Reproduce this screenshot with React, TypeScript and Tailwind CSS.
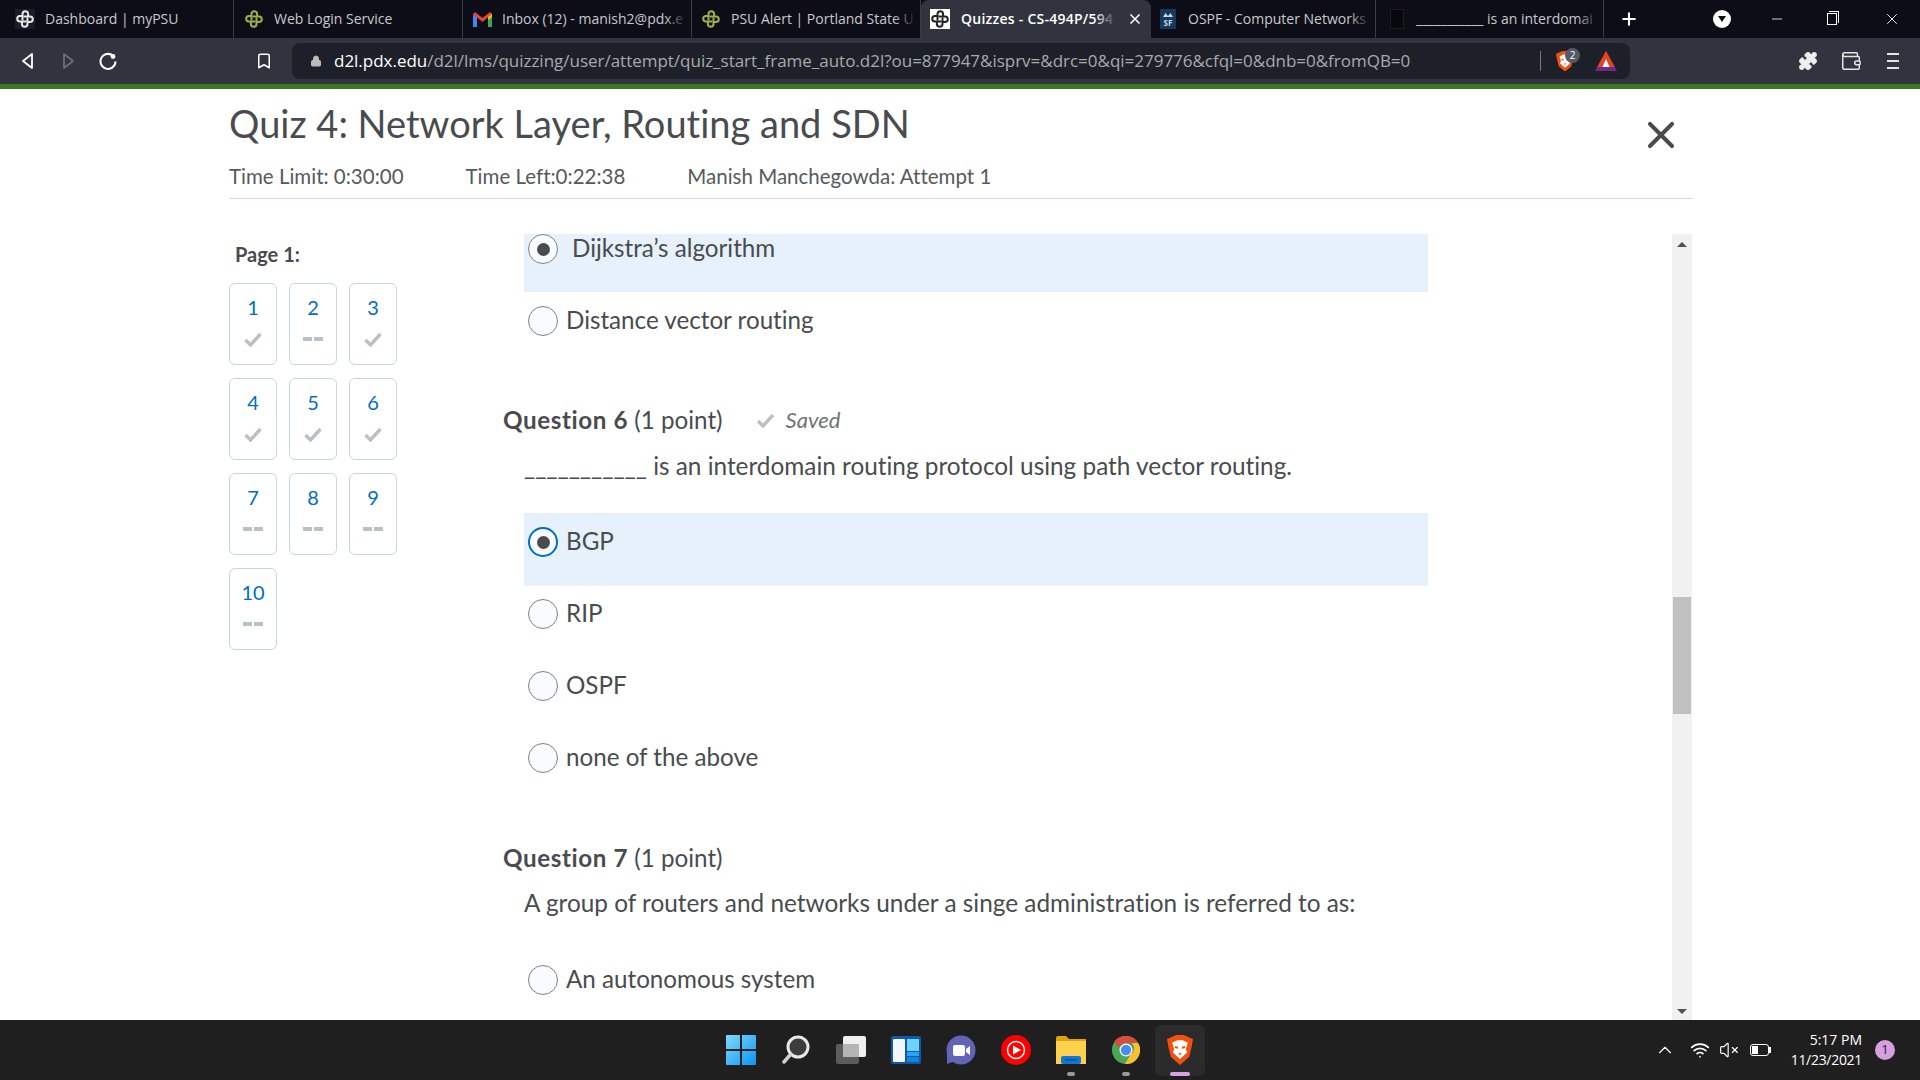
import { Lock, Bookmark, X, Plus, Minus, ChevronUp, Wifi, VolumeX, Puzzle, Wallet } from "lucide-react"
import type { ReactNode } from "react"

function PsuIcon({ color = "#9fb04a" }: { color?: string }) {
  return (
    <svg width="20" height="20" viewBox="0 0 20 20" fill="none" stroke={color} strokeWidth="2">
      <path d="M7.5 11.5V5a2.8 2.8 0 015.6 0v3" />
      <path d="M8.5 7.5H15a2.8 2.8 0 010 5.6h-3" />
      <path d="M12.5 8.5V15a2.8 2.8 0 01-5.6 0v-3" />
      <path d="M11.5 12.5H5a2.8 2.8 0 010-5.6h3" />
    </svg>
  )
}

function GmailIcon() {
  return (
    <svg width="19" height="15" viewBox="0 0 19 15">
      <path d="M0 2v13h4V5z" fill="#4285f4" />
      <path d="M19 2v13h-4V5z" fill="#34a853" />
      <path d="M0 2l2-2 7.5 6L17 0l2 2-9.5 8z" fill="#ea4335" />
      <path d="M15 5l4-3v3l-4 3z" fill="#fbbc04" />
    </svg>
  )
}

function BraveIcon({ size = 20 }: { size?: number }) {
  return (
    <svg width={size} height={size * 1.15} viewBox="0 0 20 23">
      <path d="M3 2l4-2h6l4 2 3 1-1 6-2 8-7 6-7-6-2-8-1-6z" fill="#f1500f" />
      <path d="M4 6l4-2h4l4 2-1.5 5 1 2.5-5.5 5-5.5-5 1-2.5z" fill="#fff" />
      <path d="M6 8.5l2.5.5v1.5L6 10zM14 8.5l-2.5.5v1.5L14 10zM8.5 14h3l-1.5 1.5z" fill="#f1500f" />
    </svg>
  )
}

type TabInfo = { icon: ReactNode; title: string; width: string; active?: boolean }

const tabs: TabInfo[] = [
  { icon: <div className="bg-[#1b1b2b]"><PsuIcon color="#e8e8e8" /></div>, title: "Dashboard | myPSU", width: "w-[229px] pl-[10px]" },
  { icon: <PsuIcon />, title: "Web Login Service", width: "w-[229px] pl-[10px]" },
  { icon: <GmailIcon />, title: "Inbox (12) - manish2@pdx.e", width: "w-[229px] pl-[9px]" },
  { icon: <PsuIcon />, title: "PSU Alert | Portland State U", width: "w-[229px] pl-[9px]" },
  { icon: <div className="bg-white"><PsuIcon color="#222" /></div>, title: "Quizzes - CS-494P/594", width: "w-[230px] pl-[9px]", active: true },
  {
    icon: (
      <svg width="16" height="20" viewBox="0 0 16 20">
        <rect width="16" height="20" fill="#14395c" />
        <path d="M3 8l2.5-4 2.5 3 2.5-3 2.5 4z" fill="#c9d6e3" />
        <text x="8" y="17" textAnchor="middle" fontSize="8" fontWeight="700" fill="#c9d6e3">SF</text>
      </svg>
    ),
    title: "OSPF - Computer Networks",
    width: "w-[225px] pl-[7px]",
  },
  {
    icon: <div className="ml-[2px] h-[20px] w-[14px] border border-[#1c1c24] bg-[#08080c]" />,
    title: "___________ is an interdomai",
    width: "w-[228px] pl-[10px]",
  },
]

function Tab({ tab }: { tab: TabInfo }) {
  return (
    <div
      className={
        tab.active
          ? `relative flex h-[38px] items-center gap-[11px] rounded-t-lg bg-[#31343f] pr-2 text-white ${tab.width}`
          : `relative flex h-[38px] items-center gap-[10px] border-r border-[#3a3c45] pr-1 text-[#c8c9cc] ${tab.width}`
      }
    >
      <div className="flex w-5 shrink-0 justify-center">{tab.icon}</div>
      <div className={tab.active ? "relative min-w-0 flex-1 overflow-hidden whitespace-nowrap pb-[2px] text-[14px] font-semibold tracking-[0.25px]" : "relative min-w-0 flex-1 overflow-hidden whitespace-nowrap pb-[2px] text-[14px]"}>
        {tab.title}
        <div className={tab.active ? "absolute inset-y-0 right-0 w-[22px] bg-gradient-to-r from-transparent to-[#31343f]" : "absolute inset-y-0 right-0 w-[22px] bg-gradient-to-r from-transparent to-[#0d0d17]"} />
      </div>
      {tab.active && <X size={16} strokeWidth={2.5} className="shrink-0 text-white" />}
    </div>
  )
}

function BrowserChrome() {
  return (
    <div className="shrink-0 font-['Open_Sans',sans-serif]">
      <div className="flex h-[38px] items-center bg-[#0d0d17] pl-[5px]">
        {tabs.map((t) => (
          <Tab key={t.title} tab={t} />
        ))}
        <Plus size={20} strokeWidth={2.5} className="ml-[15px] text-white" />
        <div className="ml-auto flex items-center">
          <div className="mr-[38px] flex h-[18px] w-[18px] items-center justify-center rounded-full bg-white">
            <div className="h-0 w-0 border-x-[4px] border-t-[6px] border-x-transparent border-t-[#0d0d17]" />
          </div>
          <Minus size={16} className="mr-[42px] text-white" strokeWidth={1.2} />
          <div className="relative mr-[46px] h-[12px] w-[10px] border border-white">
            <div className="absolute -right-[3px] -top-[3px] h-[12px] w-[10px] border-r border-t border-white" />
          </div>
          <X size={18} strokeWidth={1.2} className="mr-[19px] text-white" />
        </div>
      </div>
      <div className="flex h-[46px] items-center bg-[#31343f]">
        <svg width="14" height="18" viewBox="0 0 14 18" className="ml-[21px]" fill="none" stroke="#fff" strokeWidth="1.8" strokeLinejoin="round">
          <path d="M11 2L2 9l9 7z" />
        </svg>
        <svg width="14" height="18" viewBox="0 0 14 18" className="ml-[26px]" fill="none" stroke="#6b6e78" strokeWidth="1.8" strokeLinejoin="round">
          <path d="M3 2l9 7-9 7z" />
        </svg>
        <svg width="18" height="18" viewBox="0 0 18 18" className="ml-[24px]" fill="none" stroke="#fff" strokeWidth="2">
          <path d="M14 3.8A7.5 7.5 0 1 0 16.5 9.5" />
          <circle cx="14" cy="4.5" r="2.4" fill="#fff" stroke="none" />
        </svg>
        <Bookmark size={18} strokeWidth={2} className="ml-[138px] text-white" />
        <div className="ml-[19px] flex h-[36px] w-[1338px] items-center rounded-lg bg-[#1e2029] pl-[18px]">
          <Lock size={12} className="fill-[#bbb] text-[#bbb]" />
          <div className="ml-[12px] w-[1228px] whitespace-nowrap text-[17px] tracking-[-0.015px] text-[#a8a9ad]">
            <span className="text-white">d2l.pdx.edu</span>/d2l/lms/quizzing/user/attempt/quiz_start_frame_auto.d2l?ou=877947&isprv=&drc=0&qi=279776&cfql=0&dnb=0&fromQB=0
          </div>
          <div className="ml-[-22px] h-[20px] w-px bg-[#777]" />
          <div className="relative ml-[15px]">
            <BraveIcon size={18} />
            <div className="absolute -right-[6px] -top-[3px] flex h-[15px] w-[15px] items-center justify-center rounded-full bg-[#555a66] text-[10px] text-white">2</div>
          </div>
          <svg width="22" height="20" viewBox="0 0 22 20" className="ml-[21px]">
            <path d="M11 0l11 20H0z" fill="#6c2a8c" />
            <path d="M11 0l8.8 16H2.2z" fill="#e8431f" />
            <path d="M11 8l3.5 8h-7z" fill="#fff" />
          </svg>
        </div>
        <Puzzle size={20} strokeWidth={1.5} className="ml-[168px] fill-[#eee] text-[#eee]" />
        <Wallet size={22} strokeWidth={1.6} className="ml-[22px] text-[#e5e5e5]" />
        <svg width="12" height="18" viewBox="0 0 12 18" className="ml-[25px]" stroke="#e5e5e5" strokeWidth="2">
          <path d="M0 2h12M0 9h12M0 16h12" />
        </svg>
      </div>
      <div className="h-[5px] bg-[#3a7a1e]" />
    </div>
  )
}

function CheckMark({ className }: { className: string }) {
  return (
    <svg viewBox="0 0 18 15" className={className} fill="none" stroke="#b9c0c6" strokeWidth="3.4">
      <path d="M1.5 8l5 5L16.5 2" />
    </svg>
  )
}

function NavTile({ n, done }: { n: number; done: boolean }) {
  return (
    <div className="flex h-[82px] w-[48px] flex-col items-center rounded-md border border-[#cdd5dc] pt-[11px]">
      <div className="text-[20px] leading-[24px] text-[#006fbf]">{n}</div>
      <div className="mt-[11px] flex h-[18px] items-center">
        {done ? (
          <CheckMark className="h-[15px] w-[18px]" />
        ) : (
          <div className="flex gap-[2px]">
            <div className="h-[4px] w-[9px] bg-[#b9c0c6]" />
            <div className="h-[4px] w-[9px] bg-[#b9c0c6]" />
          </div>
        )}
      </div>
    </div>
  )
}

function Radio({ checked, focus }: { checked?: boolean; focus?: boolean }) {
  return (
    <div
      className={
        focus
          ? "flex h-[30px] w-[30px] shrink-0 items-center justify-center rounded-full border-2 border-[#006fbf] bg-[#f9fbff]"
          : "flex h-[30px] w-[30px] shrink-0 items-center justify-center rounded-full border border-[#7c8287] bg-[#f9fbff]"
      }
    >
      {checked && <div className="h-[13px] w-[13px] rounded-full bg-[#494c4e]" />}
    </div>
  )
}

function Option({ label, checked, focus }: { label: string; checked?: boolean; focus?: boolean }) {
  return (
    <div className={checked ? "-mb-px h-[73px] w-[904px] bg-[#e6f1fb] pl-[4px] pt-[14px]" : "h-[72px] w-[904px] pl-[4px] pt-[14px]"}>
      <div className="flex items-center">
        <Radio checked={checked} focus={focus} />
        <div className="-mt-[2px] ml-[8px] text-[24.2px] leading-[30px]">{label}</div>
      </div>
    </div>
  )
}

const navItems = [
  { n: 1, done: true },
  { n: 2, done: false },
  { n: 3, done: true },
  { n: 4, done: true },
  { n: 5, done: true },
  { n: 6, done: true },
  { n: 7, done: false },
  { n: 8, done: false },
  { n: 9, done: false },
  { n: 10, done: false },
]

function Scrollbar() {
  return (
    <div className="flex w-[20px] shrink-0 flex-col items-center bg-[#f1f1f1]">
      <div className="mt-[8px] h-0 w-0 border-x-[5px] border-b-[5px] border-x-transparent border-b-[#505050]" />
      <div className="mt-[350px] h-[117px] w-[18px] bg-[#c1c1c1]" />
      <div className="mb-[6px] mt-auto h-0 w-0 border-x-[5px] border-t-[5px] border-x-transparent border-t-[#505050]" />
    </div>
  )
}

function QuizPage() {
  return (
    <div className="flex min-h-0 flex-1 flex-col overflow-hidden bg-white pl-[229px] pr-[228px] font-['Lato',sans-serif] text-[#494c4e] [font-variant-ligatures:none]">
      <div className="h-[110px] shrink-0 border-b border-[#d3d9e3]">
        <div className="flex items-start justify-between">
          <h1 className="mt-[9px] text-[38px] leading-[50px]">Quiz 4: Network Layer, Routing and SDN</h1>
          <X size={44} strokeWidth={2.2} className="mr-[9px] mt-[24px] text-[#494c4e]" />
        </div>
        <div className="mt-[6px] flex gap-[62px] text-[20.5px] leading-[26px] text-[#565a5c]">
          <span>Time Limit: 0:30:00</span>
          <span>Time Left:0:22:38</span>
          <span>Manish Manchegowda: Attempt 1</span>
        </div>
      </div>
      <div className="flex min-h-0 flex-1 pt-[35px]">
        <div className="w-[274px] shrink-0">
          <div className="ml-[6px] mt-[8px] text-[20px] font-bold leading-[24px]">Page 1:</div>
          <div className="mt-[17px] grid w-[168px] grid-cols-3 gap-x-[12px] gap-y-[13px]">
            {navItems.map((i) => (
              <NavTile key={i.n} n={i.n} done={i.done} />
            ))}
          </div>
        </div>
        <div className="min-h-0 flex-1 overflow-hidden">
          <div className="ml-[21px]">
            <div className="h-[58px] w-[904px] bg-[#e6f1fb] pl-[4px]">
              <div className="flex items-center">
                <Radio checked />
                <div className="-mt-[2px] ml-[14px] text-[24.2px] leading-[30px]">Dijkstra’s algorithm</div>
              </div>
            </div>
            <Option label="Distance vector routing" />
          </div>
          <div className="mt-[40px] flex items-center text-[24.2px] leading-[32px]">
            <span><b className="tracking-[0.6px]">Question 6</b> (1 point)</span>
            <CheckMark className="ml-[33px] h-[15px] w-[19px]" />
            <span className="ml-[11px] text-[22px] italic text-[#6e7376]">Saved</span>
          </div>
          <div className="ml-[21px] mt-[14px] text-[24.35px] leading-[32px]">___________ is an interdomain routing protocol using path vector routing.</div>
          <div className="ml-[21px] mt-[31px]">
            <Option label="BGP" checked focus />
            <Option label="RIP" />
            <Option label="OSPF" />
            <Option label="none of the above" />
          </div>
          <div className="mt-[41px] text-[24.2px] leading-[32px]"><b className="tracking-[0.6px]">Question 7</b> (1 point)</div>
          <div className="ml-[21px] mt-[13px] text-[24.35px] leading-[32px]">A group of routers and networks under a singe administration is referred to as:</div>
          <div className="ml-[21px] mt-[32px]">
            <Option label="An autonomous system" />
          </div>
        </div>
        <Scrollbar />
      </div>
    </div>
  )
}

function TaskIcon({ children, active, dot }: { children: ReactNode; active?: boolean; dot?: boolean }) {
  return (
    <div className={active ? "relative ml-[2px] flex h-[51px] w-[50px] items-center justify-center rounded-md bg-[#2b2b2b]" : "relative flex h-[51px] w-[55px] items-center justify-center"}>
      {children}
      {dot && <div className="absolute bottom-0 h-[4px] w-[8px] rounded-full bg-[#9a9a9a]" />}
      {active && <div className="absolute bottom-0 h-[4px] w-[20px] rounded-full bg-[#d7a0e0]" />}
    </div>
  )
}

function Taskbar() {
  return (
    <div className="flex h-[60px] shrink-0 items-center bg-[#1f1f1f] pl-[713px] font-['Open_Sans',sans-serif] text-white">
      <TaskIcon>
        <svg width="30" height="30" viewBox="0 0 30 30">
          <defs>
            <linearGradient id="win" x1="0" y1="0" x2="1" y2="1">
              <stop offset="0" stopColor="#7fdcfb" />
              <stop offset="1" stopColor="#0a94f2" />
            </linearGradient>
          </defs>
          <path d="M0 1a1 1 0 011-1h13v14H0zM16 0h13a1 1 0 011 1v13H16zM0 16h14v14H1a1 1 0 01-1-1zM16 16h14v13a1 1 0 01-1 1H16z" fill="url(#win)" />
        </svg>
      </TaskIcon>
      <TaskIcon>
        <svg width="28" height="30" viewBox="0 0 28 30" fill="none">
          <circle cx="16" cy="12" r="10" fill="#3d3d3d" stroke="#e8e8e8" strokeWidth="3" />
          <path d="M8 20L2 27" stroke="#d0d0d0" strokeWidth="3.5" strokeLinecap="round" />
        </svg>
      </TaskIcon>
      <TaskIcon>
        <svg width="30" height="28" viewBox="0 0 30 28">
          <rect x="0" y="8" width="23" height="20" rx="2" fill="#5c5c5c" />
          <rect x="7" y="0" width="23" height="21" rx="2" fill="#efefef" />
          <rect x="7" y="8" width="16" height="13" fill="#b5b5b5" />
        </svg>
      </TaskIcon>
      <TaskIcon>
        <svg width="30" height="28" viewBox="0 0 30 28">
          <rect width="30" height="28" rx="2" fill="#0f5aa8" />
          <rect x="2" y="3" width="12" height="23" rx="1" fill="#f3f6fa" />
          <rect x="16" y="3" width="12" height="12" fill="#6fd3fb" />
          <rect x="16" y="16" width="12" height="4" fill="#2aa4ee" />
          <rect x="16" y="21" width="12" height="5" fill="#0f86e0" />
        </svg>
      </TaskIcon>
      <TaskIcon>
        <svg width="30" height="30" viewBox="0 0 30 30">
          <circle cx="15" cy="15" r="14.5" fill="#6264b8" />
          <path d="M1 12v17l8-3z" fill="#6264b8" />
          <rect x="7" y="10" width="12" height="11" rx="2" fill="#fff" />
          <path d="M20 14l4-3v9l-4-3z" fill="#fff" />
        </svg>
      </TaskIcon>
      <TaskIcon>
        <svg width="30" height="30" viewBox="0 0 30 30">
          <circle cx="15" cy="15" r="15" fill="#f00" />
          <circle cx="15" cy="15" r="8.5" fill="none" stroke="#fff" strokeWidth="1.5" />
          <path d="M12 10.5l8 4.5-8 4.5z" fill="#fff" />
        </svg>
      </TaskIcon>
      <TaskIcon dot>
        <svg width="30" height="28" viewBox="0 0 30 28">
          <path d="M0 2a2 2 0 012-2h8l3 3h17v23H0z" fill="#e0a30c" />
          <rect y="5" width="30" height="23" fill="#fdd14e" />
          <rect x="5" y="20" width="20" height="8" rx="2" fill="#0f78d4" />
          <rect x="9" y="23" width="12" height="1.5" fill="#0b4d8a" />
        </svg>
      </TaskIcon>
      <TaskIcon dot>
        <svg width="28" height="28" viewBox="0 0 28 28">
          <circle cx="14" cy="14" r="14" fill="#4aa854" />
          <path d="M14 0a14 14 0 0112.1 7H14a7 7 0 00-6.5 4.5L2 6a14 14 0 0112-6z" fill="#db4a3f" />
          <path d="M26.1 7A14 14 0 0113 28l6-10a7 7 0 001-11z" fill="#fbc02d" />
          <circle cx="14" cy="14" r="6.5" fill="#fff" />
          <circle cx="14" cy="14" r="5.2" fill="#4a8af4" />
        </svg>
      </TaskIcon>
      <TaskIcon active>
        <BraveIcon size={26} />
      </TaskIcon>
      <div className="ml-auto flex items-center">
        <ChevronUp size={22} strokeWidth={1.2} />
        <Wifi size={20} strokeWidth={2} className="ml-[14px]" />
        <VolumeX size={20} strokeWidth={1.4} className="ml-[9px]" />
        <div className="relative ml-[11px] h-[12px] w-[19px] rounded-[3px] border border-white p-[1px]">
          <div className="h-full w-[6px] bg-white" />
          <div className="absolute -right-[3px] top-[2px] h-[6px] w-[2px] bg-white" />
        </div>
        <div className="ml-[23px] flex w-[70px] flex-col items-end text-[14px] leading-[20px]">
          <span>5:17 PM</span>
          <span className="tracking-[-0.3px]">11/23/2021</span>
        </div>
        <div className="ml-[13px] mr-[25px] flex h-[20px] w-[20px] items-center justify-center rounded-full bg-[#d79fe0] text-[13px] text-[#1f1f1f]">1</div>
      </div>
    </div>
  )
}

export default function App() {
  return (
    <div className="flex h-screen w-screen flex-col overflow-hidden">
      <BrowserChrome />
      <QuizPage />
      <Taskbar />
    </div>
  )
}
